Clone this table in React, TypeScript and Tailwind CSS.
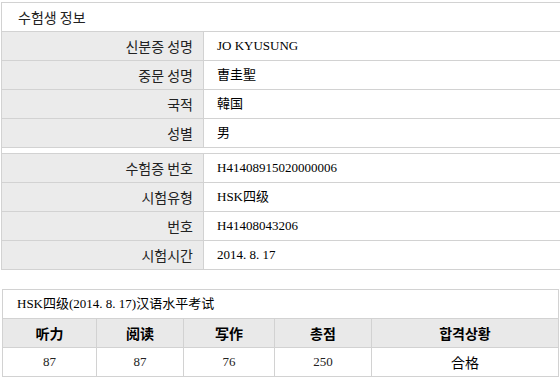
import React from 'react';

const ko = "font-['Noto_Sans_CJK_KR','Noto_Sans',sans-serif]";
const val = "font-['Liberation_Serif','Noto_Sans_CJK_SC',serif]";

const personRows = [
  ['신분증 성명', 'JO KYUSUNG'],
  ['중문 성명', '曺圭聖'],
  ['국적', '韓国'],
  ['성별', '男'],
];

const examRows = [
  ['수험증 번호', 'H41408915020000006'],
  ['시험유형', 'HSK四级'],
  ['번호', 'H41408043206'],
  ['시험시간', '2014. 8. 17'],
];

const InfoRow = ({ label, value }: { label: string; value: string }) => (
  <div className="flex h-[29px] border-b border-[#d2d2d2]">
    <div
      className={`${ko} w-[202px] shrink-0 bg-[#ebebeb] border-r border-[#d2d2d2] flex items-center justify-end pr-[10px] text-[14px] text-[#222]`}
    >
      {label}
    </div>
    <div className={`${val} flex items-center pl-[13px] text-[13px] text-black`}>{value}</div>
  </div>
);

const cols = [
  { head: '听力', score: '87', w: 'w-[94px]' },
  { head: '阅读', score: '87', w: 'w-[87px]' },
  { head: '写作', score: '76', w: 'w-[91px]' },
  { head: '총점', score: '250', w: 'w-[97px]' },
];

export default function App() {
  return (
    <div className="w-[560px] h-[379px] overflow-hidden bg-white pt-[2px]">
      <div className="ml-[1px] w-[620px] border-t border-l border-[#d2d2d2]">
        <div className={`${ko} h-[29px] border-b border-[#d2d2d2] flex items-center pl-[16px] text-[14px] text-[#222]`}>
          수험생 정보
        </div>
        {personRows.map(([l, v]) => (
          <InfoRow key={l} label={l} value={v} />
        ))}
        <div className="h-[6px] border-b border-[#d2d2d2]" />
        {examRows.map(([l, v]) => (
          <InfoRow key={l} label={l} value={v} />
        ))}
      </div>

      <div className="ml-[2px] mt-[19px] w-[557px] border border-[#d2d2d2]">
        <div className={`${val} h-[29px] border-b border-[#d2d2d2] flex items-center pl-[14px] text-[13px] text-black`}>
          HSK四级(2014. 8. 17)汉语水平考试
        </div>
        <div className="flex h-[29px] border-b border-[#d2d2d2] bg-[#e9e9e9]">
          {cols.map((c) => (
            <div
              key={c.head}
              className={`${ko} ${c.w} shrink-0 border-r border-[#d2d2d2] flex items-center justify-center text-[14px] font-bold text-black`}
            >
              {c.head}
            </div>
          ))}
          <div className={`${ko} flex-1 flex items-center justify-center text-[14px] font-bold text-black`}>
            합격상황
          </div>
        </div>
        <div className="flex h-[28px]">
          {cols.map((c) => (
            <div
              key={c.head}
              className={`${val} ${c.w} shrink-0 border-r border-[#d2d2d2] flex items-center justify-center text-[13px] text-[#222]`}
            >
              {c.score}
            </div>
          ))}
          <div className={`${ko} flex-1 flex items-center justify-center text-[14px] text-black`}>合格</div>
        </div>
      </div>
    </div>
  );
}
